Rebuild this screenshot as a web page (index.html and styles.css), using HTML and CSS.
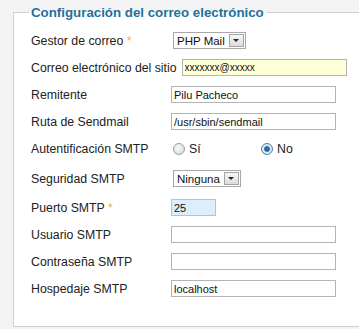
FILE: index.html
```html
<!DOCTYPE html>
<html lang="es">
<head>
    <meta charset="UTF-8">
    <meta name="viewport" content="width=device-width, initial-scale=1.0">
    <title>Configuración del correo electrónico</title>
    <link rel="stylesheet" href="styles.css">
</head>
<body>

    <!-- Mail settings -->
    <fieldset class="mail-settings">
        <legend>Configuración del correo electrónico</legend>

        <div class="row">
            <label>Gestor de correo <span class="req">*</span></label>
            <span class="select select-mailer">
                <span class="select-value">PHP Mail</span>
                <span class="select-arrow"></span>
            </span>
        </div>

        <div class="row">
            <label>Correo electrónico del sitio</label>
            <input type="text" class="field field-email" value="xxxxxxx@xxxxx">
        </div>

        <div class="row">
            <label>Remitente</label>
            <input type="text" class="field" value="Pilu Pacheco">
        </div>

        <div class="row">
            <label>Ruta de Sendmail</label>
            <input type="text" class="field" value="/usr/sbin/sendmail">
        </div>

        <div class="row row-radio">
            <label>Autentificación SMTP</label>
            <span class="radio-group">
                <span class="radio"></span><span class="radio-text">Sí</span>
            </span>
            <span class="radio-group">
                <span class="radio checked"></span><span class="radio-text">No</span>
            </span>
        </div>

        <div class="row row-select">
            <label>Seguridad SMTP</label>
            <span class="select select-security">
                <span class="select-value">Ninguna</span>
                <span class="select-arrow"></span>
            </span>
        </div>

        <div class="row">
            <label>Puerto SMTP <span class="req">*</span></label>
            <input type="text" class="field field-port" value="25">
        </div>

        <div class="row">
            <label>Usuario SMTP</label>
            <input type="text" class="field" value="">
        </div>

        <div class="row">
            <label>Contraseña SMTP</label>
            <input type="text" class="field" value="">
        </div>

        <div class="row">
            <label>Hospedaje SMTP</label>
            <input type="text" class="field" value="localhost">
        </div>
    </fieldset>

</body>
</html>
```

FILE: styles.css
```css
body {
    margin: 0;
    padding-top: 5px;
    background-color: #f3f3f3;
    font-family: 'Liberation Sans', Arial, sans-serif;
    overflow: hidden;
}

/* Fieldset */
.mail-settings {
    box-sizing: border-box;
    width: 346px;
    margin: 0 0 0 13px;
    padding: 0 0 24px 15px;
    border: 1px solid #d0d0d0;
    border-right: none;
    background-color: #fff;
}

.mail-settings legend {
    padding: 0 2px;
    color: #23709e;
    font-size: 13.3px;
    font-weight: bold;
}

/* Rows */
.row {
    display: flex;
    align-items: center;
    height: 27px;
    padding-left: 2px;
}

.row:first-of-type {
    margin-top: 7px;
}

.row-radio {
    height: 28px;
}

.row-select {
    height: 31px;
}

.row label {
    min-width: 135px;
    padding-right: 5px;
    color: #222;
    font-size: 12.3px;
    white-space: nowrap;
}

.req {
    color: #f5a85a;
}

/* Text inputs */
.field {
    box-sizing: border-box;
    width: 165px;
    height: 17px;
    margin: 0;
    padding: 0 2px;
    border: 1px solid #b4b4b4;
    background-color: #fff;
    color: #111;
    font-family: 'Liberation Sans', Arial, sans-serif;
    font-size: 11px;
}

.field-email {
    background-color: #ffffd6;
    font-size: 10px;
}

.field-port {
    width: 45px;
    background-color: #dcedfc;
    border-color: #a9c6de;
}

/* Selects */
.select {
    display: inline-flex;
    align-items: center;
    box-sizing: border-box;
    height: 17px;
    margin-left: 2px;
    padding: 0 1px 0 3px;
    border: 1px solid #a8a8a8;
    background-color: #fff;
    color: #111;
    font-size: 11.5px;
}

.select-value {
    margin-right: 4px;
}

.select-arrow {
    position: relative;
    box-sizing: border-box;
    width: 15px;
    height: 13px;
    border: 1px solid #a4a4a4;
    background: linear-gradient(#f6f6f6, #dcdcdc);
}

.select-arrow::after {
    content: '';
    position: absolute;
    left: 3.5px;
    top: 4px;
    border-left: 3px solid transparent;
    border-right: 3px solid transparent;
    border-top: 3px solid #222;
}

/* Radios */
.radio-group {
    display: inline-flex;
    align-items: center;
    width: 88px;
}

.radio {
    box-sizing: border-box;
    width: 12px;
    height: 12px;
    margin-left: 2px;
    border: 1px solid #a0a0a0;
    border-radius: 50%;
    background: radial-gradient(circle at 40% 40%, #fafafa, #d6d6d6);
}

.radio.checked {
    border-color: #5a7f9c;
    background: radial-gradient(circle, #1c5f96 0, #2f78b4 2.5px, #e4eef6 3.5px, #c8d8e6 6px);
}

.radio-text {
    margin-left: 4px;
    color: #222;
    font-size: 12.3px;
}
```
